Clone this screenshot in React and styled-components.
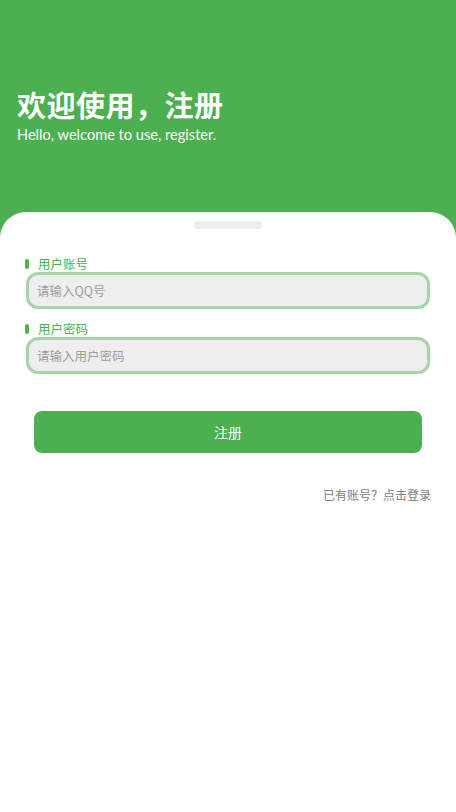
import React from 'react';
import styled, { createGlobalStyle } from 'styled-components';

const GlobalStyle = createGlobalStyle`
  html, body {
    margin: 0;
    padding: 0;
    background: #ffffff;
    font-family: "Noto Sans", "Noto Sans CJK SC", sans-serif;
  }
`;

const Page = styled.div`
  width: 456px;
  min-height: 812px;
  background: #ffffff;
  display: flex;
  flex-direction: column;
`;

const Header = styled.header`
  background: #4caf50;
  height: 212px;
  padding: 84px 17px 0;
  box-sizing: border-box;
  color: #ffffff;
`;

const Title = styled.h1`
  margin: 0;
  font-family: "Noto Sans CJK SC", sans-serif;
  font-size: 29px;
  font-weight: 600;
  line-height: 40px;
  letter-spacing: 0.5px;
`;

const Subtitle = styled.p`
  margin: 1px 0 0;
  font-family: Lato, "Noto Sans", sans-serif;
  font-size: 14.6px;
  line-height: 20px;
`;

const SheetWrap = styled.div`
  background: #4caf50;
  flex: 1;
  display: flex;
`;

const Sheet = styled.main`
  flex: 1;
  background: #ffffff;
  border-radius: 26px 26px 0 0;
  padding: 9px 26px 0;
  display: flex;
  flex-direction: column;
`;

const Handle = styled.div`
  align-self: center;
  width: 68px;
  height: 8px;
  border-radius: 4px;
  background: #eeeeee;
`;

const Form = styled.form`
  margin-top: 26px;
  display: flex;
  flex-direction: column;
`;

const Label = styled.label`
  display: flex;
  align-items: center;
  gap: 9px;
  height: 17px;
  margin-left: -1px;
  margin-top: ${(p) => (p.$first ? '0' : '11px')};
  font-family: "Noto Sans CJK SC", sans-serif;
  font-size: 12.5px;
  color: #4caf50;

  &::before {
    content: '';
    width: 4px;
    height: 10px;
    border-radius: 2px;
    background: #4caf50;
  }
`;

const Input = styled.input`
  box-sizing: border-box;
  width: 404px;
  height: 37px;
  border: 3px solid #a5d6a7;
  border-radius: 12px;
  background: #eeeeee;
  padding: 0 8px;
  outline: none;
  font-family: "Noto Sans CJK SC", sans-serif;
  font-size: 12.5px;
  color: #333;

  &::placeholder {
    color: #9e9e9e;
  }
`;

const Submit = styled.button`
  margin: 37px 8px 0;
  height: 42px;
  border: none;
  border-radius: 8px;
  background: #4caf50;
  color: #ffffff;
  font-family: "Noto Sans CJK SC", sans-serif;
  font-size: 14px;
`;

const Footer = styled.div`
  margin-top: 33px;
  margin-right: -1px;
  text-align: right;
  font-family: "Noto Sans CJK SC", sans-serif;
  font-size: 12px;
  color: #808080;
`;

export default function App() {
  return (
    <>
      <GlobalStyle />
      <Page>
        <Header>
          <Title>欢迎使用，注册</Title>
          <Subtitle>Hello, welcome to use, register.</Subtitle>
        </Header>
        <SheetWrap>
          <Sheet>
            <Handle />
            <Form onSubmit={(e) => e.preventDefault()}>
              <Label $first>用户账号</Label>
              <Input placeholder="请输入QQ号" />
              <Label>用户密码</Label>
              <Input type="password" placeholder="请输入用户密码" />
              <Submit type="submit">注册</Submit>
            </Form>
            <Footer>已有账号？点击登录</Footer>
          </Sheet>
        </SheetWrap>
      </Page>
    </>
  );
}
